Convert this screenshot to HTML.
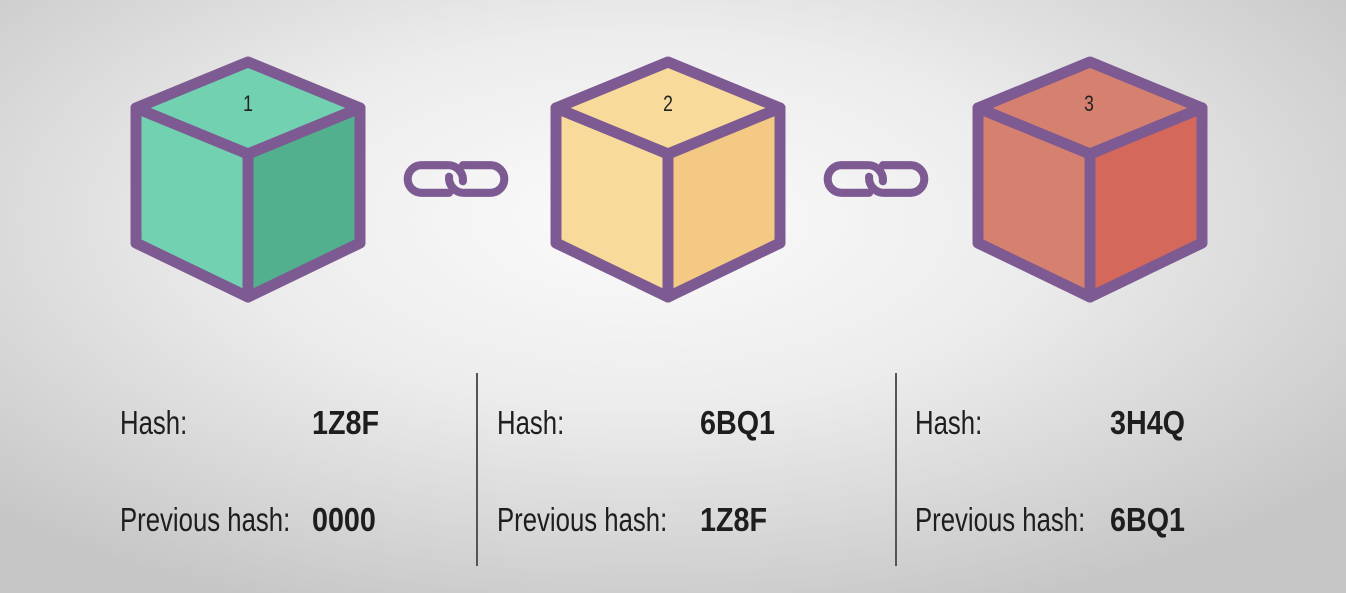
<!DOCTYPE html>
<html><head><style>
html,body{margin:0;padding:0;}
body{width:1346px;height:593px;overflow:hidden;position:relative;
background:radial-gradient(ellipse 900px 420px at 640px 220px,#fbfbfb 0%,#ececec 45%,#d4d4d4 80%,#c6c6c6 100%);
font-family:"Liberation Sans",sans-serif;}
.t{position:absolute;font-size:33px;color:#1e1e1e;transform:scaleX(0.78);transform-origin:0 0;white-space:nowrap;line-height:1;}
.b{font-weight:bold;transform:scaleX(0.87);}
.vl{position:absolute;width:2px;background:#555;top:373px;height:193px;}
</style></head><body>
<svg width="1346" height="593" style="position:absolute;left:0;top:0">
<g stroke="#7e5a93" stroke-width="11" stroke-linejoin="round">
 <g transform="translate(248,0)">
  <path d="M0 62 L112 108 L0 154 L-112 108 Z" fill="#72d1b0"/>
  <path d="M-112 108 L0 154 L0 297 L-112 243 Z" fill="#72d1b0"/>
  <path d="M112 108 L0 154 L0 297 L112 243 Z" fill="#52b08f"/>
 </g>
 <g transform="translate(668,0)">
  <path d="M0 62 L112 108 L0 154 L-112 108 Z" fill="#f8da9a"/>
  <path d="M-112 108 L0 154 L0 297 L-112 243 Z" fill="#f8da9a"/>
  <path d="M112 108 L0 154 L0 297 L112 243 Z" fill="#f4c983"/>
 </g>
 <g transform="translate(1090,0)">
  <path d="M0 62 L112 108 L0 154 L-112 108 Z" fill="#d6806f"/>
  <path d="M-112 108 L0 154 L0 297 L-112 243 Z" fill="#d6806f"/>
  <path d="M112 108 L0 154 L0 297 L112 243 Z" fill="#d4685a"/>
 </g>
</g>
<g font-family="Liberation Sans, sans-serif" font-size="22" fill="#222" text-anchor="middle">
<text x="248" y="111" transform="translate(248,0) scale(0.8,1) translate(-248,0)">1</text>
<text x="668" y="111" transform="translate(668,0) scale(0.8,1) translate(-668,0)">2</text>
<text x="1089" y="111" transform="translate(1089,0) scale(0.8,1) translate(-1089,0)">3</text>
</g>
<g fill="none" stroke="#7e5a93" stroke-width="7" stroke-linecap="round">
 <g transform="translate(456,179) scale(1.15)">
  <path d="M-6 12 H-30 A12 12 0 0 1 -30 -12 H-8 A13 13 0 0 1 6 2"/>
  <path d="M6 -12 H30 A12 12 0 0 1 30 12 H8 A13 13 0 0 1 -6 -2"/>
 </g>
 <g transform="translate(876,179) scale(1.15)">
  <path d="M-6 12 H-30 A12 12 0 0 1 -30 -12 H-8 A13 13 0 0 1 6 2"/>
  <path d="M6 -12 H30 A12 12 0 0 1 30 12 H8 A13 13 0 0 1 -6 -2"/>
 </g>
</g>
</svg>
<div class="vl" style="left:476px"></div>
<div class="vl" style="left:895px"></div>

<div class="t" style="left:120px;top:406px">Hash:</div>
<div class="t b" style="left:312px;top:406px">1Z8F</div>
<div class="t" style="left:120px;top:503px">Previous hash:</div>
<div class="t b" style="left:312px;top:503px">0000</div>

<div class="t" style="left:497px;top:406px">Hash:</div>
<div class="t b" style="left:700px;top:406px">6BQ1</div>
<div class="t" style="left:497px;top:503px">Previous hash:</div>
<div class="t b" style="left:700px;top:503px">1Z8F</div>

<div class="t" style="left:915px;top:406px">Hash:</div>
<div class="t b" style="left:1110px;top:406px">3H4Q</div>
<div class="t" style="left:915px;top:503px">Previous hash:</div>
<div class="t b" style="left:1110px;top:503px">6BQ1</div>
</body></html>
